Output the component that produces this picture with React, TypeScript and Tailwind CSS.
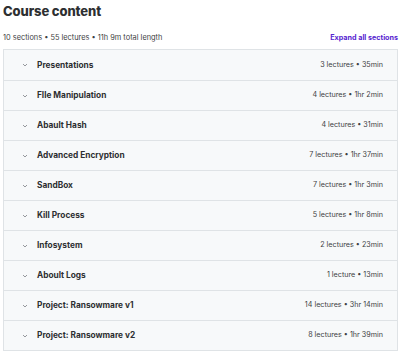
import React from "react";

const sections: [string, string][] = [
  ["Presentations", "3 lectures • 35min"],
  ["FIle Manipulation", "4 lectures • 1hr 2min"],
  ["Abault Hash", "4 lectures • 31min"],
  ["Advanced Encryption", "7 lectures • 1hr 37min"],
  ["SandBox", "7 lectures • 1hr 3min"],
  ["Kill Process", "5 lectures • 1hr 8min"],
  ["Infosystem", "2 lectures • 23min"],
  ["Aboult Logs", "1 lecture • 13min"],
  ["Project: Ransowmare v1", "14 lectures • 3hr 14min"],
  ["Project: Ransowmare v2", "8 lectures • 1hr 39min"],
];

export default function App() {
  return (
    <div
      className="w-[400px] h-[353px] bg-white text-[#2d2f31] overflow-hidden"
      style={{ fontFamily: "Inter, 'Noto Sans', sans-serif" }}
    >
      <div className="pl-[3px] pr-[2px]">
        <h2 className="text-[13px] font-extrabold leading-[20px] pt-[1px] tracking-[-0.1px]">Course content</h2>
        <div className="flex items-center justify-between h-[18px] mt-[8px]">
          <span className="text-[7.4px] text-[#3e4143]">10 sections • 55 lectures • 11h 9m total length</span>
          <span className="text-[7.2px] font-bold text-[#5624d0]">Expand all sections</span>
        </div>
        <div className="mt-[2px] w-[395px] border border-[#dfe3e6]">
          {sections.map(([t, m], i) => (
            <div
              key={t}
              className={`flex items-center justify-between h-[30px] bg-[#f7f9fa] pl-[18px] pr-[14px] ${i > 0 ? "border-t border-[#dfe3e6]" : ""}`}
            >
              <div className="flex items-center">
                <svg width="6" height="4" viewBox="0 0 6 4" className="mr-[9px]">
                  <path d="M1 1 L3 3 L5 1" fill="none" stroke="#6a6f73" strokeWidth="0.7" />
                </svg>
                <span className="text-[8.3px] font-bold text-[#2d2f31]">{t}</span>
              </div>
              <span className="text-[7.2px] text-[#3e4143]">{m}</span>
            </div>
          ))}
        </div>
      </div>
    </div>
  );
}
